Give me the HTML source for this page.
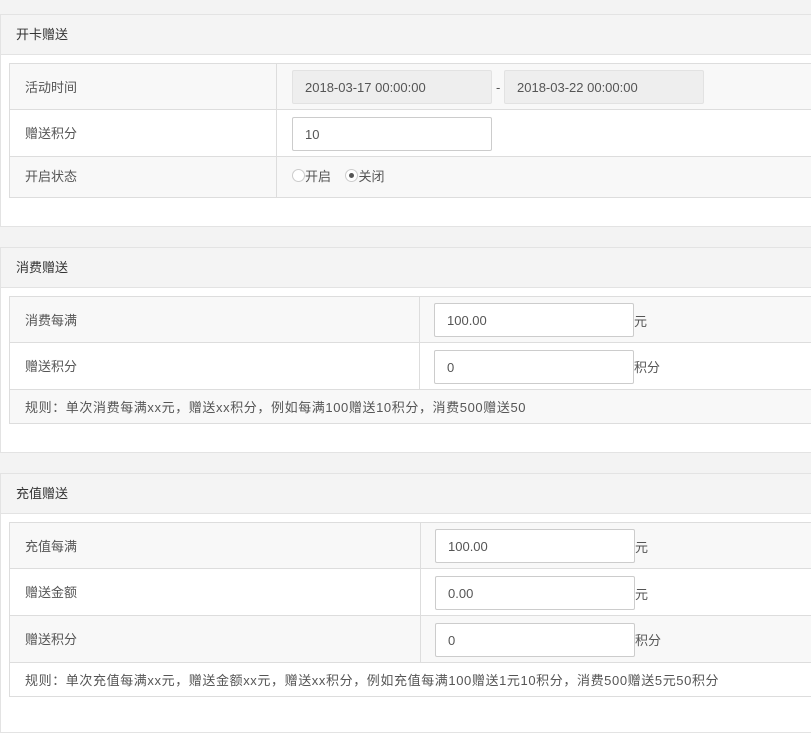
<!DOCTYPE html>
<html><head><meta charset="utf-8"><style>
*{box-sizing:border-box;margin:0;padding:0}
body{width:811px;height:723px;background:#f3f3f3;font-family:"Liberation Sans","Noto Sans CJK SC",sans-serif;font-size:13px;color:#555;position:relative;overflow:hidden}
.a{position:absolute}
.panel{position:absolute;left:0;width:812px;background:#fff;border:1px solid #e3e3e3}
.hd{position:absolute;left:0;top:0;right:0;height:40px;background:#f4f4f4;border-bottom:1px solid #e3e3e3;padding:0 15px;line-height:40px;color:#333}
.row{position:absolute;left:9px;width:803px;border:1px solid #ddd;border-top:none}
.row.first{border-top:1px solid #ddd}
.g{background:#f8f8f8}
.lbl{position:absolute;left:15px;top:1px}
.sep{position:absolute;top:0;bottom:0;border-left:1px solid #ddd}
.inp{position:absolute;width:200px;height:34px;border:1px solid #ccc;background:#fff;line-height:34px;padding-left:12px;color:#555;border-radius:2px}
.dis{background:#eee;border-color:#e2e2e2}
.rad{display:inline-block;width:13px;height:13px;border:1px solid #ccc;border-radius:50%;vertical-align:-1px;position:relative;background:#fff}
.rad.on::after{content:"";position:absolute;left:3px;top:3px;width:5px;height:5px;border-radius:50%;background:#555}
.rule{letter-spacing:0.6px}
</style></head><body>

<div class="panel" style="top:14px;height:213px">
 <div class="hd">开卡赠送</div>
</div>
<div class="row first g" style="top:63px;height:47px;line-height:46px"><span class="lbl">活动时间</span><div class="sep" style="left:266px"></div></div>
<div class="inp dis a" style="left:292px;top:70px">2018-03-17 00:00:00</div>
<div class="a" style="left:496px;top:80px">-</div>
<div class="inp dis a" style="left:504px;top:70px">2018-03-22 00:00:00</div>
<div class="row" style="top:110px;height:47px;line-height:46px;background:#fff"><span class="lbl">赠送积分</span><div class="sep" style="left:266px"></div></div>
<div class="inp a" style="left:292px;top:117px">10</div>
<div class="row g" style="top:157px;height:41px;line-height:38px"><span class="lbl">开启状态</span><div class="sep" style="left:266px"></div></div>
<div class="a" style="left:292px;top:166px"><span class="rad"></span>开启 &nbsp;&nbsp;&nbsp;<span class="rad on"></span>关闭</div>

<div class="panel" style="top:247px;height:206px">
 <div class="hd">消费赠送</div>
</div>
<div class="row first g" style="top:296px;height:47px;line-height:46px"><span class="lbl">消费每满</span><div class="sep" style="left:409px"></div></div>
<div class="inp a" style="left:434px;top:303px">100.00</div><div class="a" style="left:634px;top:311px">元</div>
<div class="row" style="top:343px;height:47px;line-height:46px;background:#fff"><span class="lbl">赠送积分</span><div class="sep" style="left:409px"></div></div>
<div class="inp a" style="left:434px;top:350px">0</div><div class="a" style="left:634px;top:357px">积分</div>
<div class="row g" style="top:390px;height:34px;line-height:33px"><span class="lbl rule">规则：单次消费每满xx元，赠送xx积分，例如每满100赠送10积分，消费500赠送50</span></div>

<div class="panel" style="top:473px;height:260px">
 <div class="hd">充值赠送</div>
</div>
<div class="row first g" style="top:522px;height:47px;line-height:46px"><span class="lbl">充值每满</span><div class="sep" style="left:410px"></div></div>
<div class="inp a" style="left:435px;top:529px">100.00</div><div class="a" style="left:635px;top:537px">元</div>
<div class="row" style="top:569px;height:47px;line-height:46px;background:#fff"><span class="lbl">赠送金额</span><div class="sep" style="left:410px"></div></div>
<div class="inp a" style="left:435px;top:576px">0.00</div><div class="a" style="left:635px;top:584px">元</div>
<div class="row g" style="top:616px;height:47px;line-height:46px"><span class="lbl">赠送积分</span><div class="sep" style="left:410px"></div></div>
<div class="inp a" style="left:435px;top:623px">0</div><div class="a" style="left:635px;top:630px">积分</div>
<div class="row" style="top:663px;height:34px;line-height:33px;background:#fff"><span class="lbl rule">规则：单次充值每满xx元，赠送金额xx元，赠送xx积分，例如充值每满100赠送1元10积分，消费500赠送5元50积分</span></div>

</body></html>
